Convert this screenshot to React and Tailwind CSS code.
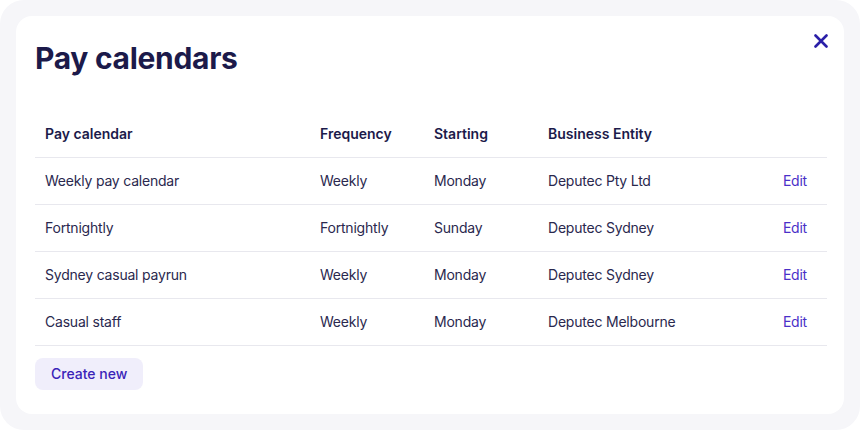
const rows = [
  { name: 'Weekly pay calendar', freq: 'Weekly', start: 'Monday', entity: 'Deputec Pty Ltd' },
  { name: 'Fortnightly', freq: 'Fortnightly', start: 'Sunday', entity: 'Deputec Sydney' },
  { name: 'Sydney casual payrun', freq: 'Weekly', start: 'Monday', entity: 'Deputec Sydney' },
  { name: 'Casual staff', freq: 'Weekly', start: 'Monday', entity: 'Deputec Melbourne' },
];

const cols = 'grid grid-cols-[275px_114px_114px_1fr_auto] items-center';

const App = () => {
  return (
    <div className="w-[860px] h-[430px] bg-[#f6f6f9] rounded-[24px] p-4 font-['Inter',sans-serif]">
      <div className="relative h-full bg-white rounded-[16px] pl-[19px] pr-[17px] pt-6 pb-6 flex flex-col">
        {/* Close */}
        <button type="button" className="absolute top-[18px] right-[16px] text-[#2a1fa8]">
          <svg width="14" height="14" viewBox="0 0 14 14" fill="none" stroke="currentColor" strokeWidth="2.6" strokeLinecap="round">
            <path d="M1.5 1.5l11 11M12.5 1.5l-11 11" />
          </svg>
        </button>

        <h1 className="text-[30px] leading-9 font-bold tracking-[-0.01em] text-[#1c1a4a]">Pay calendars</h1>

        <div className="mt-[35px]">
          {/* Header */}
          <div className={`${cols} h-[47px] border-b border-[#e8e8ee] text-sm font-semibold text-[#1c1a4a]`}>
            <div className="pl-[10px]">Pay calendar</div>
            <div className="pl-[10px]">Frequency</div>
            <div className="pl-[10px]">Starting</div>
            <div className="pl-[10px]">Business Entity</div>
            <div />
          </div>

          {rows.map((r) => (
            <div key={r.name} className={`${cols} h-[47px] border-b border-[#e8e8ee] text-sm tracking-[-0.015em] text-[#2a284e]`}>
              <div className="pl-[10px]">{r.name}</div>
              <div className="pl-[10px]">{r.freq}</div>
              <div className="pl-[10px]">{r.start}</div>
              <div className="pl-[10px]">{r.entity}</div>
              <a href="#" className="pr-5 text-[#4a30c8]">Edit</a>
            </div>
          ))}
        </div>

        <div className="mt-3">
          <button
            type="button"
            className="h-8 px-4 rounded-lg bg-[#f0eefb] text-sm font-medium text-[#3a23b8]"
          >
            Create new
          </button>
        </div>
      </div>
    </div>
  );
};

export default App;
